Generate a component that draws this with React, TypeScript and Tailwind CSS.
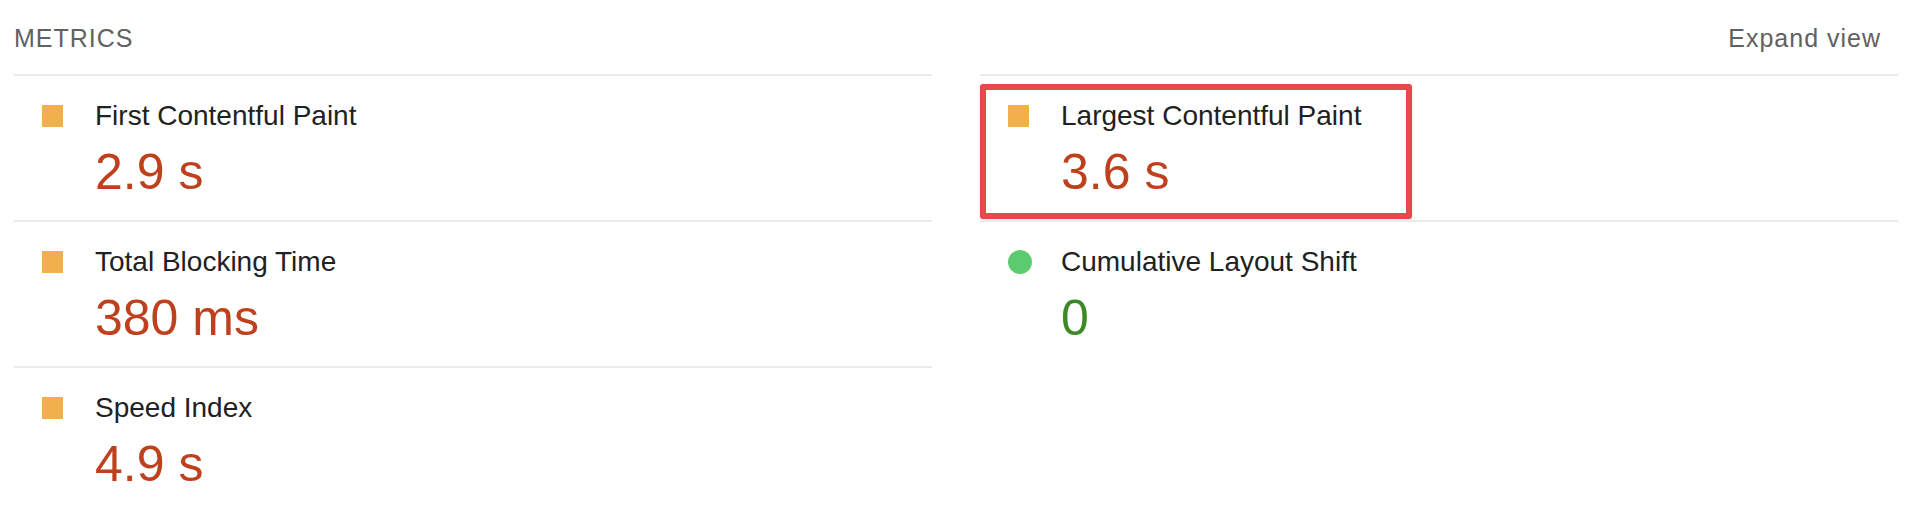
import React from "react";

type Metric = {
  label: string;
  value: string;
  status: "average" | "pass";
  highlight?: boolean;
};

const metrics: Metric[] = [
  { label: "First Contentful Paint", value: "2.9 s", status: "average" },
  { label: "Largest Contentful Paint", value: "3.6 s", status: "average", highlight: true },
  { label: "Total Blocking Time", value: "380 ms", status: "average" },
  { label: "Cumulative Layout Shift", value: "0", status: "pass" },
  { label: "Speed Index", value: "4.9 s", status: "average" },
];

function MetricIcon({ status }: { status: Metric["status"] }) {
  if (status === "pass") {
    return <span className="block w-[24px] h-[24px] rounded-full bg-[#5ccb6f]" />;
  }
  return <span className="block w-[21px] h-[22px] bg-[#f3af4d]" />;
}

function MetricItem({ metric }: { metric: Metric }) {
  const valueColor = metric.status === "pass" ? "text-[#3b8a26]" : "text-[#bf401c]";
  return (
    <div className="relative h-[146px] border-t-2 border-[#ebebeb] pt-[23px]">
      <div className="flex items-center pl-[28px]">
        <div className="w-[53px] flex items-center">
          <MetricIcon status={metric.status} />
        </div>
        <span className="text-[28px] leading-[34px] text-[#212121]">{metric.label}</span>
      </div>
      <div className={`pl-[81px] mt-[9px] text-[50px] leading-[60px] ${valueColor}`}>
        {metric.value}
      </div>
      {metric.highlight && (
        <div className="absolute left-0 top-[8px] w-[432px] h-[135px] rounded-[3px] border-[6px] border-[#e5484d] shadow-[0_1px_3px_rgba(0,0,0,0.15)]" />
      )}
    </div>
  );
}

export default function App() {
  return (
    <div
      className="w-[1910px] h-[508px] overflow-hidden bg-white pl-[14px] pr-[12px]"
      style={{ fontFamily: '"Liberation Sans", Arial, sans-serif' }}
    >
      <div className="flex items-start justify-between h-[74px] pt-[23px] text-[25px] leading-[30px] tracking-[1px] text-[#616161]">
        <span>METRICS</span>
        <span className="pr-[17px]">Expand view</span>
      </div>
      <div className="grid grid-cols-2 gap-x-[48px]">
        {metrics.map((m) => (
          <MetricItem key={m.label} metric={m} />
        ))}
      </div>
    </div>
  );
}
